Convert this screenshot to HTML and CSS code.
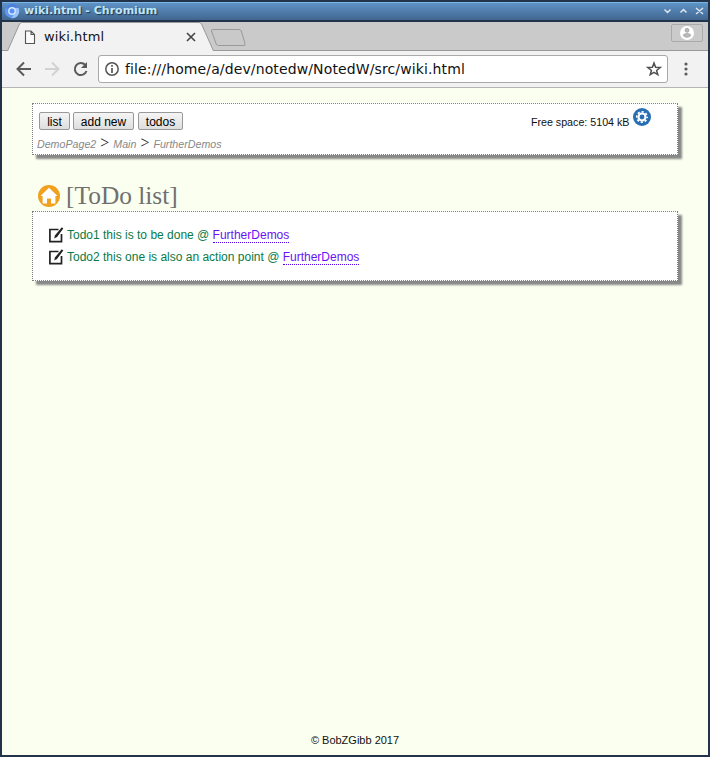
FILE: index.html
```html
<!DOCTYPE html>
<html lang="en">
<head>
<meta charset="utf-8">
<title>wiki.html</title>
<link rel="stylesheet" href="styles.css">
</head>
<body>
<div class="window">
  <header class="titlebar">
    <svg class="app-icon" width="16" height="16" viewBox="0 0 16 16"><circle cx="8" cy="8" r="7.200" fill="#5f97f5"/><path d="M8 4.700h6.400A7.200 7.200 0 0 1 7.500 15.200l3.400-5.500z" fill="#9bc2fb"/><path d="M2.200 4A7.200 7.200 0 0 1 14.400 4.700H8L5 9z" fill="#4a80dc"/><circle cx="8" cy="8" r="3.900" fill="#d6e6ff"/><circle cx="8" cy="8" r="2.500" fill="#5b91ee"/></svg>
    <span class="title">wiki.html - Chromium</span>
    <svg class="controls" width="44" height="18" viewBox="0 0 44 18" fill="none" stroke="#dce5ee" stroke-width="1.5"><path d="M4.500 7.500l3 3 3-3M20.500 10.500l3-3 3 3M36 6l7 6M43 6l-7 6"/></svg>
  </header>
  <div class="tabs">
    <svg class="tab-shape" width="706" height="29" viewBox="0 0 706 29"><path d="M0 28.500H706" stroke="#999"/><path d="M5.500 29L17.500 2Q18.500.5 20 .5H197Q198.500.5 199.500 2L211.500 29" fill="#f2f2f2" stroke="#999"/><path d="M211 7.500H237Q238.500 7.500 239.300 9L243 21.500Q243.500 23.500 242 23.500H216.500Q215 23.500 214.200 22L209.500 9Q209 7.500 211 7.500Z" fill="#c9c9c9" stroke="#999"/></svg>
    <svg class="doc-icon" width="12" height="15" viewBox="0 0 12 15" fill="#fafafa" stroke="#555" stroke-width="1.1"><path d="M1.500 1h5.500l3.500 3.500v9h-9zM7 1v3.500h3.500"/></svg>
    <span class="tab-name">wiki.html</span>
    <svg class="tab-close" width="10" height="10" viewBox="0 0 10 10" stroke="#444" stroke-width="1.6"><path d="M1 1l8 8M9 1L1 9"/></svg>
    <span class="profile"><svg width="14" height="14" viewBox="0 0 14 14"><circle cx="7" cy="7" r="7" fill="#fff"/><circle cx="7" cy="4.300" r="2" fill="#bbb" stroke="#999" stroke-width=".7"/><path d="M3.200 9.600q0-2 3.800-2t3.800 2q-1.500 1.700-3.800 1.700T3.200 9.600z" fill="#bbb" stroke="#999" stroke-width=".7"/></svg></span>
  </div>
  <div class="toolbar">
    <svg class="nav" width="82" height="20" viewBox="0 0 82 20" fill="none" stroke-width="2"><path d="M15 10H2M8 3.500L1.500 10 8 16.500" stroke="#5a5a5a"/><path d="M29 10h13M36 3.500L42.500 10 36 16.500" stroke="#d2d2d2"/><path d="M69.300 6A6 6 0 1 0 70.500 12" stroke="#5a5a5a"/><path d="M71 3v6h-6z" fill="#5a5a5a"/></svg>
    <div class="address">
      <svg width="14" height="14" viewBox="0 0 14 14"><circle cx="7" cy="7" r="6.200" fill="none" stroke="#555" stroke-width="1.500"/><path d="M7 6v5M7 3v1.800" stroke="#555" stroke-width="1.700"/></svg>
      <span class="url">file:///home/a/dev/notedw/NotedW/src/wiki.html</span>
      <svg class="star" width="16" height="16" viewBox="0 0 16 16" fill="none" stroke="#505050" stroke-width="1.500"><path d="M8 2l1.600 4.200 4.600.3-3.600 2.900 1.200 4.300L8 11.300l-3.800 2.400 1.200-4.300-3.600-2.900 4.600-.3z"/></svg>
    </div>
    <svg class="menu" width="4" height="14" viewBox="0 0 4 14" fill="#5c5c5c"><circle cx="2" cy="2" r="1.600"/><circle cx="2" cy="7" r="1.600"/><circle cx="2" cy="12" r="1.600"/></svg>
  </div>
  <main class="page">
    <section class="panel top">
      <div class="actions">
        <button>list</button><button class="wide">add new</button><button class="mid">todos</button>
        <span class="space">Free space: 5104 kB</span>
        <svg class="gear" width="18" height="18" viewBox="0 0 18 18"><circle cx="9" cy="9" r="9" fill="#296db5"/><circle cx="9" cy="9" r="3.500" fill="none" stroke="#fff" stroke-width="2.100"/><circle cx="9" cy="9" r="5.200" fill="none" stroke="#fff" stroke-width="1.700" stroke-dasharray="2.100 1.984" stroke-dashoffset="1.050"/></svg>
      </div>
      <nav class="crumbs"><i>DemoPage2</i> &gt; <i>Main</i> &gt; <i>FurtherDemos</i></nav>
    </section>
    <div class="heading">
      <svg width="22" height="22" viewBox="0 0 22 22"><circle cx="11" cy="11" r="11" fill="#f0a120"/><path d="M11 2.800l8.500 8.200h-2.100v7.500h-4.400v-5H9v5H4.600V11H2.500z" fill="#fff"/></svg>
      <h1>[ToDo list]</h1>
    </div>
    <section class="panel list">
      <div class="todo"><svg width="16" height="16" viewBox="0 0 16 16"><path d="M10.500 2.500H1.900v12.200h11.600V7" fill="none" stroke="#222" stroke-width="1.700"/><path d="M13.800.2l1.500 1.200-6.300 8.600-2.800 1.600.7-3.100z" fill="#222"/></svg><span>Todo1 this is to be done @ <a>FurtherDemos</a></span></div>
      <div class="todo"><svg width="16" height="16" viewBox="0 0 16 16"><path d="M10.500 2.500H1.900v12.200h11.600V7" fill="none" stroke="#222" stroke-width="1.700"/><path d="M13.800.2l1.500 1.200-6.300 8.600-2.800 1.600.7-3.100z" fill="#222"/></svg><span>Todo2 this one is also an action point @ <a>FurtherDemos</a></span></div>
    </section>
    <footer>© BobZGibb 2017</footer>
  </main>
</div>
</body>
</html>
```
FILE: styles.css
```css
* { box-sizing: border-box; }
body { margin: 0; }
svg { display: block; flex: none; }
.window { width: 710px; height: 757px; border: 2px solid #23344a; display: flex; flex-direction: column; background: #fbffef; }
.titlebar { height: 20px; flex: none; display: flex; background: linear-gradient(#5f93c6, #41668f); border-top: 1px solid #79b5e8; border-bottom: 2px solid #23344a; padding-left: 2px; }
.app-icon { margin-top: 0; }
.title { font: bold 11px/16px "DejaVu Sans", sans-serif; color: #bfe5fa; margin-left: 4px; text-shadow: 1px 1px 1px #20354f; }
.controls { margin-left: auto; margin-right: 4px; margin-top: -1px; }
.tabs { height: 29px; flex: none; display: flex; position: relative; background: #cacaca; }
.tab-shape { position: absolute; left: 0; top: 0; }
.doc-icon, .tab-name, .tab-close { position: relative; }
.doc-icon { margin: 8px 0 0 22px; }
.tab-name { font: 13px/29px "DejaVu Sans", sans-serif; letter-spacing: .12px; color: #111; margin-left: 8px; width: 142px; }
.tab-close { margin-top: 10px; }
.profile { margin: 2px 5px 0 auto; width: 32px; height: 18px; border: 1px solid #aaa; border-radius: 2px; position: relative; display: flex; align-items: center; justify-content: center; }
.toolbar { height: 37px; flex: none; display: flex; background: #f2f2f2; border-bottom: 1px solid #b5b5b5; padding-left: 14px; }
.nav { margin-top: 8px; }
.address { width: 570px; height: 28px; margin-top: 4px; border: 1px solid #a9a9a9; border-radius: 3px; background: #fff; display: flex; align-items: center; padding: 0 5px 0 6px; }
.url { font: 14px/26px "DejaVu Sans", sans-serif; letter-spacing: .12px; color: #111; margin-left: 6px; }
.star { margin-left: auto; }
.menu { margin: 11px 0 0 16px; }
.page { flex: 1; display: flex; flex-direction: column; padding: 15px 30px 0; font-family: "Liberation Sans", sans-serif; }
.panel { width: 646px; background: #fff; border: 1px dotted #808080; box-shadow: 4px 4px 2px #888; }
.top { height: 52px; padding: 4px 4px 0; }
.actions { display: flex; height: 26px; }
button { width: 31px; height: 18px; margin: 4px 0 0 2px; padding: 2px 0 0; border: 1px solid #999; border-radius: 2px; background: linear-gradient(#f5f5f5, #dedede); font: 12px/14px "Liberation Sans", sans-serif; color: #000; }
button.wide { width: 61px; margin-left: 3px; }
button.mid { width: 45px; margin-left: 4px; }
.space { font-size: 10.700px; line-height: 12px; margin: 8px 3.500px 0 auto; color: #111; }
.gear { margin-right: 22px; }
.crumbs { font: 16px/18px "Liberation Serif", serif; color: #222; white-space: nowrap; }
.crumbs i { font: italic 10.670px "Liberation Sans", sans-serif; color: #888; }
.heading { display: flex; height: 56px; padding: 30px 0 0 6px; }
.heading h1 { margin: -5px 0 0 6px; font: 25.400px/30px "Liberation Serif", serif; color: #707070; }
.list { height: 70px; padding: 13px 0 0 15px; }
.todo { display: flex; align-items: flex-start; height: 22px; padding-top: 3px; font-size: 12px; line-height: 14px; color: #087a48; }
.todo svg { margin-top: -1px; }
.todo span { margin-left: 3px; }
.todo a { color: #6a12f5; border-bottom: 1px dotted #5500e8; }
footer { margin-top: auto; margin-bottom: 9px; text-align: center; font-size: 11px; line-height: 12px; color: #111; }
```
